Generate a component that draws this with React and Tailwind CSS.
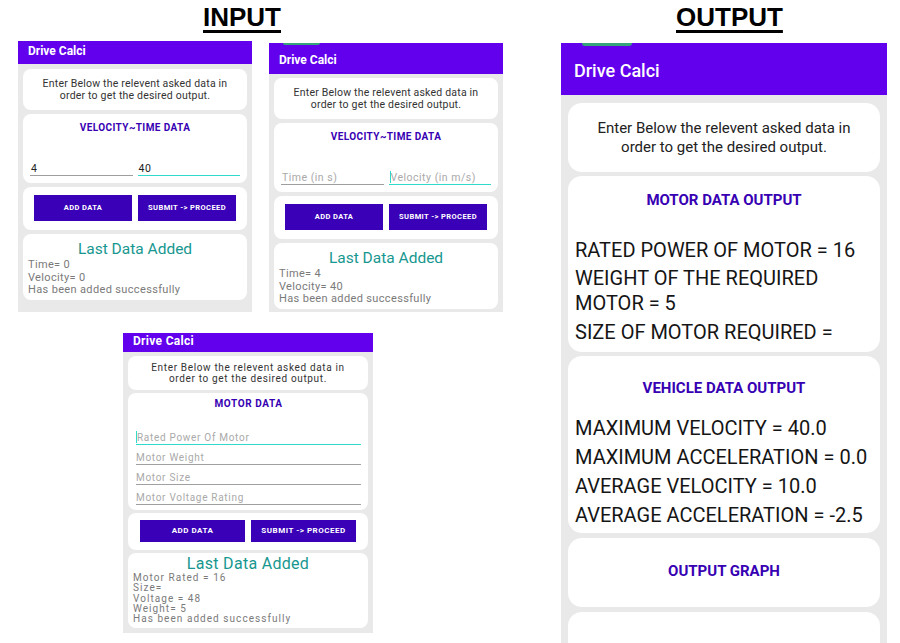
import React from 'react';

const font = "font-['Roboto',sans-serif]";

function Field({ text, placeholder, active, cursor }) {
  return (
    <div
      className={`flex-1 h-[14px] border-b text-[10.5px] leading-[13px] tracking-[0.5px] pl-[1px] flex items-end ${
        active ? 'border-[#2fd9cc]' : 'border-[#9e9e9e]'
      }`}
    >
      {cursor && <span className="w-px h-[12px] bg-[#2fd9cc] mb-[1px]" />}
      {text ? (
        <span className="text-[#222]">{text}</span>
      ) : (
        <span className="text-[#a9a9a9]">{placeholder}</span>
      )}
    </div>
  );
}

function SmallPhone({ tall, filled, time, velocity }) {
  return (
    <div className={`w-[234px] ${tall ? 'h-[269px]' : 'h-[271px]'} bg-[#e9e9e9] overflow-hidden flex flex-col ${font}`}>
      <div className={`relative bg-[#6200ee] shrink-0 pl-[10px] ${tall ? 'h-[31px] pt-[10px]' : 'h-[23px] pt-[3px]'}`}>
        {tall && <div className="absolute top-0 left-[14px] w-[37px] h-[2px] rounded-b-full bg-[#35a47a]" />}
        <span className="block text-[12px] leading-[14px] font-bold text-white">Drive Calci</span>
      </div>
      <div className={`flex flex-col gap-[4px] px-[5px] ${tall ? 'pt-[4px]' : 'pt-[5px]'}`}>
        <div className="h-[41px] bg-white rounded-[8px] pt-[9px] text-center text-[10.5px] leading-[12px] tracking-[0.2px] text-[#333]">
          Enter Below the relevent asked data in
          <br />
          order to get the desired output.
        </div>
        <div className="h-[69px] bg-white rounded-[8px] pt-[8px] px-[7px]">
          <div className="text-center text-[10px] leading-[12px] tracking-[0.4px] font-bold text-[#3700b3]">VELOCITY~TIME DATA</div>
          <div className="flex gap-[5px] mt-[28px]">
            <Field text={filled ? '4' : ''} placeholder="Time (in s)" />
            <Field text={filled ? '40' : ''} placeholder="Velocity (in m/s)" active cursor={!filled} />
          </div>
        </div>
        <div className="h-[43px] bg-white rounded-[8px] pt-[8px] px-[11px] flex gap-[6px]">
          <button className="flex-1 h-[26px] bg-[#3a00b8] text-white text-[7.5px] font-bold tracking-[0.4px]">ADD DATA</button>
          <button className="flex-1 h-[26px] bg-[#3a00b8] text-white text-[7.5px] font-bold tracking-[0.4px]">SUBMIT -&gt; PROCEED</button>
        </div>
        <div className="h-[66px] bg-white rounded-[8px] pt-[6px] px-[5px]">
          <div className="text-center text-[15.5px] leading-[18px] text-[#17978f]">Last Data Added</div>
          <div className="mt-[1px] text-[11px] leading-[12.5px] tracking-[0.35px] text-[#7a7a7a]">
            <div>Time= {time}</div>
            <div>Velocity= {velocity}</div>
            <div>Has been added successfully</div>
          </div>
        </div>
      </div>
    </div>
  );
}

function MotorPhone() {
  const inputs = ['Rated Power Of Motor', 'Motor Weight', 'Motor Size', 'Motor Voltage Rating'];
  return (
    <div className={`w-[250px] h-[300px] bg-[#e9e9e9] overflow-hidden flex flex-col ${font}`}>
      <div className="h-[19px] bg-[#6200ee] pl-[10px] pt-[1px] shrink-0">
        <span className="block text-[12px] leading-[14px] tracking-[0.3px] font-bold text-white">Drive Calci</span>
      </div>
      <div className="flex flex-col gap-[3px] px-[5px] pt-[4px]">
        <div className="h-[34px] bg-white rounded-[8px] pt-[6px] text-center text-[10px] leading-[11px] tracking-[0.65px] text-[#333]">
          Enter Below the relevent asked data in
          <br />
          order to get the desired output.
        </div>
        <div className="h-[117px] bg-white rounded-[8px] pt-[5px] pl-[8px] pr-[7px]">
          <div className="text-center text-[10px] leading-[11px] tracking-[0.6px] font-bold text-[#3700b3]">MOTOR DATA</div>
          <div className="flex flex-col gap-[6px] mt-[22px]">
            {inputs.map((p, i) => (
              <div
                key={p}
                className={`h-[14px] border-b flex items-end text-[10px] leading-[13px] tracking-[0.7px] text-[#a9a9a9] ${
                  i === 0 ? 'border-[#2fd9cc]' : 'border-[#a0a0a0]'
                }`}
              >
                {i === 0 && <span className="w-px h-[12px] bg-[#2fd9cc] mb-[1px]" />}
                <span>{p}</span>
              </div>
            ))}
          </div>
        </div>
        <div className="h-[37px] bg-white rounded-[8px] pt-[7px] px-[12px] flex gap-[6px]">
          <button className="flex-1 h-[22px] bg-[#3a00b8] text-white text-[8px] font-bold tracking-[0.5px]">ADD DATA</button>
          <button className="flex-1 h-[22px] bg-[#3a00b8] text-white text-[8px] font-bold tracking-[0.5px]">SUBMIT -&gt; PROCEED</button>
        </div>
        <div className="h-[75px] bg-white rounded-[8px] pt-[3px] px-[5px]">
          <div className="text-center text-[16px] leading-[16px] tracking-[0.3px] text-[#17978f]">Last Data Added</div>
          <div className="mt-[1px] text-[10px] leading-[10.3px] tracking-[1.05px] text-[#7a7a7a]">
            <div>Motor Rated = 16</div>
            <div>Size=</div>
            <div>Voltage = 48</div>
            <div>Weight= 5</div>
            <div>Has been added successfully</div>
          </div>
        </div>
      </div>
    </div>
  );
}

function OutputPhone() {
  const vehicle = [
    'MAXIMUM VELOCITY = 40.0',
    'MAXIMUM ACCELERATION = 0.0',
    'AVERAGE VELOCITY = 10.0',
    'AVERAGE ACCELERATION = -2.5',
  ];
  return (
    <div className={`w-[326px] h-[600px] bg-[#e9e9e9] overflow-hidden flex flex-col ${font}`}>
      <div className="relative h-[52px] bg-[#6200ee] pl-[13px] pt-[17px] shrink-0">
        <div className="absolute top-0 left-[21px] w-[50px] h-[3px] rounded-b-full bg-[#35a47a]" />
        <span className="block text-[18px] leading-[22px] font-medium text-white">Drive Calci</span>
      </div>
      <div className="flex flex-col gap-[4px] px-[7px] pt-[8px] text-[#151515]">
        <div className="h-[69px] bg-white rounded-[14px] pt-[16px] text-center text-[15px] leading-[19px] text-[#222]">
          Enter Below the relevent asked data in
          <br />
          order to get the desired output.
        </div>
        <div className="h-[176px] bg-white rounded-[14px] pt-[15px] px-[7px]">
          <div className="text-center text-[15px] leading-[19px] font-bold text-[#3700b3]">MOTOR DATA OUTPUT</div>
          <div className="mt-[28px] text-[20px] leading-[25px] whitespace-nowrap">RATED POWER OF MOTOR = 16</div>
          <div className="mt-[3px] text-[20px] leading-[25px] whitespace-nowrap">
            WEIGHT OF THE REQUIRED
            <br />
            MOTOR = 5
          </div>
          <div className="mt-[4px] text-[20px] leading-[25px] whitespace-nowrap">SIZE OF MOTOR REQUIRED =</div>
        </div>
        <div className="h-[177px] bg-white rounded-[14px] pt-[23px] px-[7px]">
          <div className="text-center text-[15px] leading-[19px] font-bold text-[#3700b3]">VEHICLE DATA OUTPUT</div>
          <div className="mt-[18px] flex flex-col gap-[4px]">
            {vehicle.map((v) => (
              <div key={v} className="text-[20px] leading-[25px] whitespace-nowrap">
                {v}
              </div>
            ))}
          </div>
        </div>
        <div className="h-[69px] mt-[1px] bg-white rounded-[14px] pt-[24px]">
          <div className="text-center text-[15px] leading-[19px] font-bold text-[#3700b3]">OUTPUT GRAPH</div>
        </div>
        <div className="h-[60px] mt-[1px] bg-white rounded-[14px]" />
      </div>
    </div>
  );
}

const title = "block font-['Liberation_Sans',Arial,sans-serif] font-bold text-[26px] leading-[30px] text-black underline decoration-[3px] underline-offset-[4px]";

export default function App() {
  return (
    <div className="w-[900px] h-[643px] bg-white flex overflow-hidden">
      <div className="w-[561px] shrink-0 flex flex-col">
        <div className="h-[41px] pl-[203px] pt-[2px]">
          <span className={title}>INPUT</span>
        </div>
        <div className="flex items-start gap-[17px] pl-[18px]">
          <SmallPhone time="0" velocity="0" filled />
          <div className="mt-[2px]">
            <SmallPhone tall time="4" velocity="40" />
          </div>
        </div>
        <div className="pl-[123px] mt-[21px]">
          <MotorPhone />
        </div>
      </div>
      <div className="flex flex-col">
        <div className="h-[43px] pl-[115px] pt-[2px]">
          <span className={title}>OUTPUT</span>
        </div>
        <OutputPhone />
      </div>
    </div>
  );
}
